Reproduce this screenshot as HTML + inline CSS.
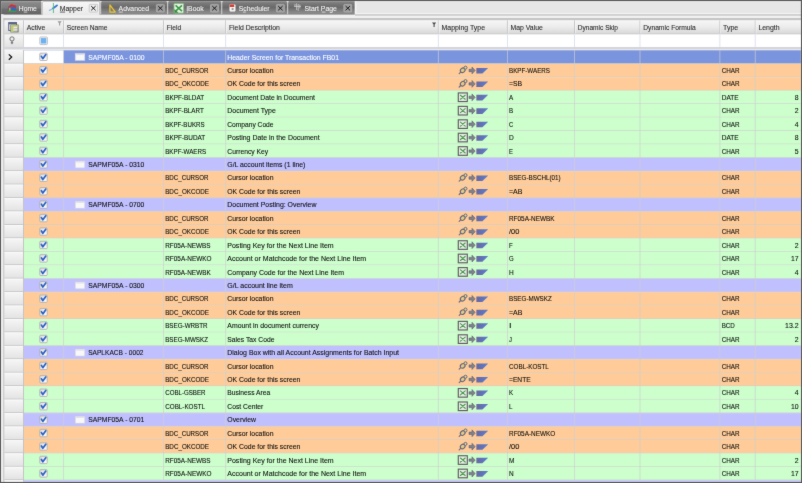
<!DOCTYPE html>
<html lang="en">
<head>
<meta charset="utf-8">
<title>Mapper</title>
<style>
html,body{margin:0;padding:0;background:#5a5a5a;overflow:hidden}
body{width:802px;height:483px;font-family:"Liberation Sans",sans-serif}
svg{display:block;position:absolute;left:0;top:0}
text{font-family:"Liberation Sans",sans-serif}
</style>
</head>
<body>
<svg width="802" height="483" viewBox="0 0 802 483" font-family="Liberation Sans, sans-serif">
<defs>
<linearGradient id="gTab" x1="0" y1="0" x2="0" y2="1"><stop offset="0" stop-color="#909090"/><stop offset="0.14" stop-color="#7b7b7b"/><stop offset="0.48" stop-color="#696969"/><stop offset="1" stop-color="#949494"/></linearGradient>
<linearGradient id="gTabH" x1="0" y1="0" x2="0" y2="1"><stop offset="0" stop-color="#9a9a9a"/><stop offset="0.14" stop-color="#888888"/><stop offset="0.5" stop-color="#7e7e7e"/><stop offset="0.62" stop-color="#6e6e6e"/><stop offset="1" stop-color="#676767"/></linearGradient>
<linearGradient id="gTabA" x1="0" y1="0" x2="0" y2="1"><stop offset="0" stop-color="#f8f8f8"/><stop offset="1" stop-color="#e9e9e9"/></linearGradient>
<linearGradient id="gHdr" x1="0" y1="0" x2="0" y2="1"><stop offset="0" stop-color="#f6f6f6"/><stop offset="0.5" stop-color="#ececec"/><stop offset="1" stop-color="#d9d9d9"/></linearGradient>
<linearGradient id="gInd" x1="0" y1="0" x2="0" y2="1"><stop offset="0" stop-color="#f6f6f6"/><stop offset="1" stop-color="#e2e2e2"/></linearGradient>
<linearGradient id="gFlag" x1="0" y1="0" x2="1" y2="0"><stop offset="0" stop-color="#68689e"/><stop offset="1" stop-color="#5b7cd4"/></linearGradient>
<linearGradient id="gChk" x1="0" y1="0" x2="1" y2="1"><stop offset="0" stop-color="#dcdcdc"/><stop offset="1" stop-color="#ffffff"/></linearGradient>
<g id="chk">
 <rect x="-3.7" y="-3.7" width="7.4" height="7.4" rx="0.8" fill="url(#gChk)" stroke="#a8a8a8" stroke-width="0.8"/>
 <path d="M-2.1,-0.5 L-0.7,1.8 L2.3,-2.3" fill="none" stroke="#2a62c8" stroke-width="1.7" stroke-linecap="round" stroke-linejoin="round"/>
</g>
<g id="arrow">
 <path d="M0,2.2 L3,2.2 L3,0 L6.2,3.4 L3,6.8 L3,4.6 L0,4.6 Z" fill="#828288" stroke="#56567a" stroke-width="0.55" stroke-linejoin="round"/>
</g>
<g id="flag">
 <path d="M0,0 L11.8,0 L6,5.6 L0,5.6 Z" fill="url(#gFlag)"/>
</g>
<g id="pin">
 <path d="M0.6,7.8 L2.6,5.8" stroke="#6a6a82" stroke-width="1.2" stroke-linecap="round"/>
 <ellipse cx="4.1" cy="4.5" rx="2.5" ry="2.1" transform="rotate(-40 4.1 4.5)" fill="#e2cc80" stroke="#646480" stroke-width="1.1"/>
 <circle cx="6.9" cy="1.9" r="1.5" fill="#e8d890" stroke="#646480" stroke-width="1"/>
</g>
<g id="xl">
 <rect x="0.4" y="0.4" width="9" height="8.6" fill="#e6eee6" stroke="#5c5c5c" stroke-width="1.15"/>
 <path d="M2.5,2.7 L7.3,6.7 M7.3,2.7 L2.5,6.7" stroke="#4c9a4c" stroke-width="1.15" stroke-linecap="round"/>
</g>
<g id="fold">
 <rect x="0" y="0" width="9.6" height="6.9" fill="#f8f8f8" stroke="#cfcfda" stroke-width="0.6"/><rect x="0.3" y="0.3" width="9" height="1.2" fill="#dedee8"/>
</g>
<g id="tclose">
 <rect x="-4" y="-3.8" width="8" height="7.6" rx="0.8" fill="#9c9c9c" stroke="#bababa" stroke-width="0.6"/>
 <path d="M-2.2,-2.1 L2.2,2.1 M2.2,-2.1 L-2.2,2.1" stroke="#1a1a1a" stroke-width="1"/>
</g>
<g id="tcloseA">
 <rect x="-4.2" y="-3.9" width="8.4" height="7.8" rx="0.8" fill="#ededed" stroke="#bdbdbd" stroke-width="0.7"/>
 <path d="M-2.2,-2.1 L2.2,2.1 M2.2,-2.1 L-2.2,2.1" stroke="#1a1a1a" stroke-width="1"/>
</g>
<filter id="soft" filterUnits="userSpaceOnUse" x="0" y="0" width="802" height="483" color-interpolation-filters="sRGB">
 <feConvolveMatrix order="3" kernelMatrix="0.012 0.06 0.012 0.06 0.712 0.06 0.012 0.06 0.012" divisor="1" edgeMode="duplicate" preserveAlpha="true"/>
</filter>
<g id="funnel">
 <path d="M-2.1,-2 L2.1,-2 L0.55,0 L0.55,2.4 L-0.55,2.4 L-0.55,0 Z"/>
</g>
</defs>
<g filter="url(#soft)">
<rect x="0" y="0" width="802" height="483" fill="#ececec"/>
<rect x="0" y="0" width="802" height="1.35" fill="#5a5a5a"/>
<rect x="1" y="1.1" width="800" height="13.6" fill="#e6e6e6"/>
<rect x="355" y="13" width="446" height="1.2" fill="#f4f4f4"/>
<rect x="355" y="1.3" width="1.4" height="12.9" fill="#f6f6f6"/>
<rect x="1" y="14.2" width="800" height="3.9" fill="#f1f1f1"/>
<rect x="355" y="14.2" width="446" height="1.5" fill="#c8c8c8"/>
<rect x="3.4" y="18" width="797.4" height="2.4" fill="#c5c5c5"/>
<rect x="1.2" y="1.1" width="40.4" height="13.2" fill="url(#gTabH)"/>
<rect x="41.6" y="0.8" width="58.6" height="14.4" fill="url(#gTabA)"/>
<path d="M42,14.9 L42,1.2 L99.8,1.2 L99.8,14.9" fill="none" stroke="#a2a2a2" stroke-width="0.8"/>
<rect x="100.2" y="1.1" width="67" height="13.2" fill="url(#gTab)"/>
<rect x="167.2" y="1.1" width="54.1" height="13.2" fill="url(#gTab)"/>
<rect x="221.3" y="1.1" width="65.9" height="13.2" fill="url(#gTab)"/>
<rect x="287.2" y="1.1" width="67.4" height="13.2" fill="url(#gTab)"/>
<rect x="1.2" y="13.6" width="40.4" height="0.8" fill="#626262"/>
<rect x="100.2" y="13.6" width="254.4" height="0.8" fill="#787878"/>
<rect x="41.4" y="2" width="1.2" height="12.3" fill="#c6c6c6"/>
<rect x="41" y="1" width="2" height="1.2" fill="#e2e2e2"/>
<rect x="100" y="2" width="1.2" height="12.3" fill="#c6c6c6"/>
<rect x="99.6" y="1" width="2" height="1.2" fill="#e2e2e2"/>
<rect x="167" y="2" width="1.2" height="12.3" fill="#c6c6c6"/>
<rect x="166.6" y="1" width="2" height="1.2" fill="#e2e2e2"/>
<rect x="221.1" y="2" width="1.2" height="12.3" fill="#c6c6c6"/>
<rect x="220.7" y="1" width="2" height="1.2" fill="#e2e2e2"/>
<rect x="287" y="2" width="1.2" height="12.3" fill="#c6c6c6"/>
<rect x="286.6" y="1" width="2" height="1.2" fill="#e2e2e2"/>
<text x="18.8" y="10.9" fill="#f4f4f4" stroke="#f4f4f4" stroke-width="0.1" font-size="7.7" textLength="17.99" lengthAdjust="spacingAndGlyphs">Home</text>
<rect x="23.79" y="11.7" width="3.56" height="0.7" fill="#f4f4f4"/>
<text x="59.7" y="10.9" fill="#2a2a2a" stroke="#2a2a2a" stroke-width="0.1" font-size="7.7" textLength="23.34" lengthAdjust="spacingAndGlyphs">Mapper</text>
<rect x="59.9" y="11.7" width="5.17" height="0.7" fill="#2a2a2a"/>
<use href="#tcloseA" x="93.4" y="8.2"/>
<text x="118.6" y="10.9" fill="#f4f4f4" stroke="#f4f4f4" stroke-width="0.1" font-size="7.7" textLength="30.35" lengthAdjust="spacingAndGlyphs">Advanced</text>
<rect x="118.8" y="11.7" width="3.96" height="0.7" fill="#f4f4f4"/>
<use href="#tclose" x="160.4" y="8.2"/>
<text x="186.6" y="10.9" fill="#f4f4f4" stroke="#f4f4f4" stroke-width="0.1" font-size="7.7" textLength="17.05" lengthAdjust="spacingAndGlyphs">iBook</text>
<rect x="186.8" y="11.7" width="1.33" height="0.7" fill="#f4f4f4"/>
<use href="#tclose" x="214.5" y="8.2"/>
<text x="238.8" y="10.9" fill="#f4f4f4" stroke="#f4f4f4" stroke-width="0.1" font-size="7.7" textLength="30.73" lengthAdjust="spacingAndGlyphs">Scheduler</text>
<rect x="242.95" y="11.7" width="2.97" height="0.7" fill="#f4f4f4"/>
<use href="#tclose" x="280.4" y="8.2"/>
<text x="304.4" y="10.9" fill="#f4f4f4" stroke="#f4f4f4" stroke-width="0.1" font-size="7.7" textLength="32.5" lengthAdjust="spacingAndGlyphs">Start Page</text>
<rect x="321.8" y="11.7" width="3.61" height="0.7" fill="#f4f4f4"/>
<use href="#tclose" x="347.8" y="8.2"/>
<g transform="translate(7.7,4)"><path d="M0.2,6 L8.4,6 L8.4,8 L0.2,8 Z" fill="#3f9a3f"/><path d="M0.6,2.6 L8.2,3 L8.2,6.6 L0.6,6.6 Z" fill="#3566c4"/><rect x="1.3" y="3.6" width="1.5" height="3.1" fill="#e39a2f"/><path d="M0.8,2.4 L3.6,0.2 L8.6,1.8 L8.4,3.6 L4,2.6 L1.4,3.6 Z" fill="#dc2a26"/></g>
<g transform="translate(49,3)"><path d="M0.4,7.4 Q2.4,6.6 4.2,5.2" stroke="#86b6e6" stroke-width="1.2" stroke-linecap="round" fill="none"/><path d="M4.2,5.2 Q6.4,3.8 8,2.4" stroke="#2f7ad2" stroke-width="1.9" stroke-linecap="round" fill="none"/><path d="M4.4,0 L4.4,10" stroke="#4fb877" stroke-width="0.9"/></g>
<g transform="translate(108.4,3.6)"><path d="M1.5,1.4 L1.5,8.5 L6.9,8.5 Z" fill="none" stroke="#e8c330" stroke-width="1.25" stroke-linejoin="round"/></g>
<g transform="translate(173.6,3)"><rect x="0.3" y="0.3" width="9.9" height="9.9" rx="0.9" fill="#e6f2e4" stroke="#6aa868" stroke-width="0.8"/><path d="M0.8,9.8 L0.8,6 L5,9.8 Z" fill="#2f8a3a"/><path d="M2,2.4 L8.4,8.2 M8.4,2.4 L2,8.2" stroke="#3c9a46" stroke-width="1.6"/></g>
<g transform="translate(229.6,4.5)"><rect x="0" y="0" width="5.8" height="6.9" rx="0.8" fill="#fafafa" stroke="#cfcfcf" stroke-width="0.4"/><path d="M0,0.6 Q0,0 0.8,0 L4.6,0 L4.6,2.4 L0,2.4 Z" fill="#d93a32"/><rect x="2" y="3.4" width="2" height="2.2" fill="#9a9a9a"/></g>
<g transform="translate(294,3.4)" stroke="#dcdcdc" stroke-width="0.7" fill="none"><path d="M1,3 L1,0.6 M2.6,6.6 L2.6,0 M4.2,7.4 L4.2,0.6 M5.8,5 L5.8,1.2 M0,3 L7,3"/></g>
<rect x="0" y="0" width="1.1" height="483" fill="#5a5a5a"/>
<rect x="800.9" y="0" width="1.1" height="483" fill="#5a5a5a"/>
<rect x="0" y="481.8" width="802" height="1.2" fill="#5a5a5a"/>
<rect x="1.1" y="14.2" width="2.4" height="467.6" fill="#ededed"/>
<rect x="3.4" y="18" width="1.1" height="463.8" fill="#bcbcbc"/>
<rect x="4.5" y="20.3" width="796.3" height="13.1" fill="url(#gHdr)"/>
<rect x="4.5" y="33.2" width="796.3" height="1.3" fill="#cdcdcd"/>
<rect x="23.05" y="20.3" width="0.9" height="13.1" fill="#c2c2c2"/>
<rect x="23.95" y="20.3" width="0.7" height="13.1" fill="#fbfbfb" opacity="0.8"/>
<rect x="63.15" y="20.3" width="0.9" height="13.1" fill="#c2c2c2"/>
<rect x="64.05" y="20.3" width="0.7" height="13.1" fill="#fbfbfb" opacity="0.8"/>
<rect x="163.15" y="20.3" width="0.9" height="13.1" fill="#c2c2c2"/>
<rect x="164.05" y="20.3" width="0.7" height="13.1" fill="#fbfbfb" opacity="0.8"/>
<rect x="225.25" y="20.3" width="0.9" height="13.1" fill="#c2c2c2"/>
<rect x="226.15" y="20.3" width="0.7" height="13.1" fill="#fbfbfb" opacity="0.8"/>
<rect x="437.85" y="20.3" width="0.9" height="13.1" fill="#c2c2c2"/>
<rect x="438.75" y="20.3" width="0.7" height="13.1" fill="#fbfbfb" opacity="0.8"/>
<rect x="506.95" y="20.3" width="0.9" height="13.1" fill="#c2c2c2"/>
<rect x="507.85" y="20.3" width="0.7" height="13.1" fill="#fbfbfb" opacity="0.8"/>
<rect x="574.15" y="20.3" width="0.9" height="13.1" fill="#c2c2c2"/>
<rect x="575.05" y="20.3" width="0.7" height="13.1" fill="#fbfbfb" opacity="0.8"/>
<rect x="639.55" y="20.3" width="0.9" height="13.1" fill="#c2c2c2"/>
<rect x="640.45" y="20.3" width="0.7" height="13.1" fill="#fbfbfb" opacity="0.8"/>
<rect x="719.45" y="20.3" width="0.9" height="13.1" fill="#c2c2c2"/>
<rect x="720.35" y="20.3" width="0.7" height="13.1" fill="#fbfbfb" opacity="0.8"/>
<rect x="754.75" y="20.3" width="0.9" height="13.1" fill="#c2c2c2"/>
<rect x="755.65" y="20.3" width="0.7" height="13.1" fill="#fbfbfb" opacity="0.8"/>
<text x="26.7" y="29.6" fill="#2c2c2c" stroke="#2c2c2c" stroke-width="0.1" font-size="7.7" textLength="18.54" lengthAdjust="spacingAndGlyphs">Active</text>
<text x="66.8" y="29.6" fill="#2c2c2c" stroke="#2c2c2c" stroke-width="0.1" font-size="7.7" textLength="40.66" lengthAdjust="spacingAndGlyphs">Screen Name</text>
<text x="166.8" y="29.6" fill="#2c2c2c" stroke="#2c2c2c" stroke-width="0.1" font-size="7.7" textLength="14.41" lengthAdjust="spacingAndGlyphs">Field</text>
<text x="228.9" y="29.6" fill="#2c2c2c" stroke="#2c2c2c" stroke-width="0.1" font-size="7.7" textLength="51.02" lengthAdjust="spacingAndGlyphs">Field Description</text>
<text x="441.5" y="29.6" fill="#2c2c2c" stroke="#2c2c2c" stroke-width="0.1" font-size="7.7" textLength="43.51" lengthAdjust="spacingAndGlyphs">Mapping Type</text>
<text x="510.6" y="29.6" fill="#2c2c2c" stroke="#2c2c2c" stroke-width="0.1" font-size="7.7" textLength="32.18" lengthAdjust="spacingAndGlyphs">Map Value</text>
<text x="577.8" y="29.6" fill="#2c2c2c" stroke="#2c2c2c" stroke-width="0.1" font-size="7.7" textLength="40.1" lengthAdjust="spacingAndGlyphs">Dynamic Skip</text>
<text x="643.2" y="29.6" fill="#2c2c2c" stroke="#2c2c2c" stroke-width="0.1" font-size="7.7" textLength="52.6" lengthAdjust="spacingAndGlyphs">Dynamic Formula</text>
<text x="723.1" y="29.6" fill="#2c2c2c" stroke="#2c2c2c" stroke-width="0.1" font-size="7.7" textLength="15.13" lengthAdjust="spacingAndGlyphs">Type</text>
<text x="758.4" y="29.6" fill="#2c2c2c" stroke="#2c2c2c" stroke-width="0.1" font-size="7.7" textLength="21.19" lengthAdjust="spacingAndGlyphs">Length</text>
<use href="#funnel" x="59.6" y="23.2" fill="#9a9a9a"/>
<use href="#funnel" x="434.1" y="24.6" fill="#4a4a4a"/>
<g transform="translate(8.2,22.1)"><rect x="0.5" y="0.5" width="7.8" height="7.8" fill="#dfe2f0" stroke="#5c6488" stroke-width="1"/><rect x="0.5" y="0.3" width="7.8" height="1.9" fill="#5c6488"/><rect x="2.7" y="3" width="7.2" height="6.8" fill="#fafaf4" stroke="#6e7060" stroke-width="1"/><rect x="2.7" y="3" width="7.2" height="1.6" fill="#b9c766"/><rect x="2.7" y="3" width="2.6" height="6.8" fill="#bfcb6e"/><path d="M5.4,6.2 L9.8,6.2 M5.4,8 L9.8,8" stroke="#8a8a80" stroke-width="0.6"/></g>
<rect x="4.5" y="34.5" width="19" height="12.7" fill="url(#gInd)"/>
<rect x="23.5" y="34.5" width="777.3" height="12.7" fill="#ffffff"/>
<rect x="63.2" y="34.5" width="0.8" height="12.7" fill="#d6dcee"/>
<rect x="163.2" y="34.5" width="0.8" height="12.7" fill="#d6dcee"/>
<rect x="225.3" y="34.5" width="0.8" height="12.7" fill="#d6dcee"/>
<rect x="437.9" y="34.5" width="0.8" height="12.7" fill="#d6dcee"/>
<rect x="507" y="34.5" width="0.8" height="12.7" fill="#d6dcee"/>
<rect x="574.2" y="34.5" width="0.8" height="12.7" fill="#d6dcee"/>
<rect x="639.6" y="34.5" width="0.8" height="12.7" fill="#d6dcee"/>
<rect x="719.5" y="34.5" width="0.8" height="12.7" fill="#d6dcee"/>
<rect x="754.8" y="34.5" width="0.8" height="12.7" fill="#d6dcee"/>
<rect x="23.1" y="34.5" width="0.8" height="12.7" fill="#cfcfcf"/>
<g transform="translate(9.6,36.6)" fill="none" stroke="#555" stroke-width="0.8"><circle cx="2.4" cy="2.3" r="2.1"/><path d="M2.4,4.4 L2.4,7.6 M1.2,6.2 L3.6,6.2"/></g>
<g transform="translate(43.6,40.8)"><rect x="-3.8" y="-3.8" width="7.6" height="7.6" rx="0.8" fill="#eef4fc" stroke="#b4b4b4" stroke-width="0.8"/><rect x="-2.7" y="-2.7" width="5.4" height="5.4" fill="#6cb2f0"/></g>
<rect x="4.5" y="47.2" width="796.3" height="3.13" fill="#dcdcdc"/>
<rect x="4.5" y="47.2" width="796.3" height="1.5" fill="#d0d3da"/>
<rect x="4.5" y="49.33" width="796.3" height="1" fill="#ececec"/>
<clipPath id="cl"><rect x="0" y="0" width="802" height="481.8"/></clipPath>
<g clip-path="url(#cl)">
<rect x="4.5" y="50.33" width="19" height="13.44" fill="url(#gInd)"/>
<rect x="4.5" y="62.77" width="19" height="1" fill="#c2c2c2"/>
<rect x="4.5" y="50.33" width="18.4" height="0.7" fill="#fbfbfb"/>
<rect x="23.5" y="50.33" width="777.3" height="13.44" fill="#7A94DE"/>
<rect x="23.5" y="50.33" width="40.1" height="13.44" fill="#ffffff"/>
<rect x="4.5" y="63.02" width="796.3" height="0.8" fill="#CFCFCF" opacity="0.85"/>
<use href="#chk" x="43.5" y="56.83"/>
<use href="#fold" x="75.2" y="53.53"/>
<text x="88.2" y="59.53" fill="#ffffff" stroke="#ffffff" stroke-width="0.1" font-size="7.5" textLength="56.4" lengthAdjust="spacingAndGlyphs">SAPMF05A - 0100</text>
<text x="227.3" y="59.53" fill="#ffffff" stroke="#ffffff" stroke-width="0.1" font-size="7.5" textLength="111.66" lengthAdjust="spacingAndGlyphs">Header Screen for Transaction FB01</text>
<rect x="4.5" y="63.77" width="19" height="13.44" fill="url(#gInd)"/>
<rect x="4.5" y="76.2" width="19" height="1" fill="#c2c2c2"/>
<rect x="4.5" y="63.77" width="18.4" height="0.7" fill="#fbfbfb"/>
<rect x="23.5" y="63.77" width="777.3" height="13.44" fill="#FFCC99"/>
<rect x="4.5" y="76.45" width="796.3" height="0.8" fill="#CFCFCF" opacity="0.85"/>
<use href="#chk" x="43.5" y="70.27"/>
<text x="165.2" y="72.97" fill="#101010" stroke="#101010" stroke-width="0.1" font-size="7.5" textLength="43.25" lengthAdjust="spacingAndGlyphs">BDC_CURSOR</text>
<text x="227.3" y="72.97" fill="#101010" stroke="#101010" stroke-width="0.1" font-size="7.5" textLength="46.22" lengthAdjust="spacingAndGlyphs">Cursor location</text>
<use href="#pin" x="458.6" y="65.77"/>
<use href="#arrow" x="469" y="67.07"/>
<use href="#flag" x="476.4" y="67.97"/>
<text x="509" y="72.97" fill="#101010" stroke="#101010" stroke-width="0.1" font-size="7.5" textLength="40.97" lengthAdjust="spacingAndGlyphs">BKPF-WAERS</text>
<text x="721.7" y="72.97" fill="#101010" stroke="#101010" stroke-width="0.1" font-size="7.5" textLength="17.9" lengthAdjust="spacingAndGlyphs">CHAR</text>
<rect x="4.5" y="77.2" width="19" height="13.44" fill="url(#gInd)"/>
<rect x="4.5" y="89.64" width="19" height="1" fill="#c2c2c2"/>
<rect x="4.5" y="77.2" width="18.4" height="0.7" fill="#fbfbfb"/>
<rect x="23.5" y="77.2" width="777.3" height="13.44" fill="#FFCC99"/>
<rect x="4.5" y="89.89" width="796.3" height="0.8" fill="#CFCFCF" opacity="0.85"/>
<use href="#chk" x="43.5" y="83.7"/>
<text x="165.2" y="86.4" fill="#101010" stroke="#101010" stroke-width="0.1" font-size="7.5" textLength="43.81" lengthAdjust="spacingAndGlyphs">BDC_OKCODE</text>
<text x="227.3" y="86.4" fill="#101010" stroke="#101010" stroke-width="0.1" font-size="7.5" textLength="73.05" lengthAdjust="spacingAndGlyphs">OK Code for this screen</text>
<use href="#pin" x="458.6" y="79.2"/>
<use href="#arrow" x="469" y="80.5"/>
<use href="#flag" x="476.4" y="81.4"/>
<text x="509" y="86.4" fill="#101010" stroke="#101010" stroke-width="0.1" font-size="7.5" textLength="13.12" lengthAdjust="spacingAndGlyphs">=SB</text>
<text x="721.7" y="86.4" fill="#101010" stroke="#101010" stroke-width="0.1" font-size="7.5" textLength="17.9" lengthAdjust="spacingAndGlyphs">CHAR</text>
<rect x="4.5" y="90.64" width="19" height="13.44" fill="url(#gInd)"/>
<rect x="4.5" y="103.08" width="19" height="1" fill="#c2c2c2"/>
<rect x="4.5" y="90.64" width="18.4" height="0.7" fill="#fbfbfb"/>
<rect x="23.5" y="90.64" width="777.3" height="13.44" fill="#CCFFCC"/>
<rect x="4.5" y="103.33" width="796.3" height="0.8" fill="#CFCFCF" opacity="0.85"/>
<use href="#chk" x="43.5" y="97.14"/>
<text x="165.2" y="99.84" fill="#101010" stroke="#101010" stroke-width="0.1" font-size="7.5" textLength="38.93" lengthAdjust="spacingAndGlyphs">BKPF-BLDAT</text>
<text x="227.3" y="99.84" fill="#101010" stroke="#101010" stroke-width="0.1" font-size="7.5" textLength="87.6" lengthAdjust="spacingAndGlyphs">Document Date in Document</text>
<use href="#xl" x="457.9" y="92.54"/>
<use href="#arrow" x="469" y="93.94"/>
<use href="#flag" x="476.4" y="94.84"/>
<text x="509" y="99.84" fill="#101010" stroke="#101010" stroke-width="0.1" font-size="7.5" textLength="4.2" lengthAdjust="spacingAndGlyphs">A</text>
<text x="721.7" y="99.84" fill="#101010" stroke="#101010" stroke-width="0.1" font-size="7.5" textLength="16.96" lengthAdjust="spacingAndGlyphs">DATE</text>
<text x="794.78" y="99.84" fill="#101010" stroke="#101010" stroke-width="0.1" font-size="7.5" textLength="3.82" lengthAdjust="spacingAndGlyphs">8</text>
<rect x="4.5" y="104.08" width="19" height="13.44" fill="url(#gInd)"/>
<rect x="4.5" y="116.52" width="19" height="1" fill="#c2c2c2"/>
<rect x="4.5" y="104.08" width="18.4" height="0.7" fill="#fbfbfb"/>
<rect x="23.5" y="104.08" width="777.3" height="13.44" fill="#CCFFCC"/>
<rect x="4.5" y="116.77" width="796.3" height="0.8" fill="#CFCFCF" opacity="0.85"/>
<use href="#chk" x="43.5" y="110.58"/>
<text x="165.2" y="113.28" fill="#101010" stroke="#101010" stroke-width="0.1" font-size="7.5" textLength="38.53" lengthAdjust="spacingAndGlyphs">BKPF-BLART</text>
<text x="227.3" y="113.28" fill="#101010" stroke="#101010" stroke-width="0.1" font-size="7.5" textLength="48.45" lengthAdjust="spacingAndGlyphs">Document Type</text>
<use href="#xl" x="457.9" y="105.98"/>
<use href="#arrow" x="469" y="107.38"/>
<use href="#flag" x="476.4" y="108.28"/>
<text x="509" y="113.28" fill="#101010" stroke="#101010" stroke-width="0.1" font-size="7.5" textLength="4.12" lengthAdjust="spacingAndGlyphs">B</text>
<text x="721.7" y="113.28" fill="#101010" stroke="#101010" stroke-width="0.1" font-size="7.5" textLength="17.9" lengthAdjust="spacingAndGlyphs">CHAR</text>
<text x="794.78" y="113.28" fill="#101010" stroke="#101010" stroke-width="0.1" font-size="7.5" textLength="3.82" lengthAdjust="spacingAndGlyphs">2</text>
<rect x="4.5" y="117.52" width="19" height="13.44" fill="url(#gInd)"/>
<rect x="4.5" y="129.95" width="19" height="1" fill="#c2c2c2"/>
<rect x="4.5" y="117.52" width="18.4" height="0.7" fill="#fbfbfb"/>
<rect x="23.5" y="117.52" width="777.3" height="13.44" fill="#CCFFCC"/>
<rect x="4.5" y="130.2" width="796.3" height="0.8" fill="#CFCFCF" opacity="0.85"/>
<use href="#chk" x="43.5" y="124.02"/>
<text x="165.2" y="126.72" fill="#101010" stroke="#101010" stroke-width="0.1" font-size="7.5" textLength="39.36" lengthAdjust="spacingAndGlyphs">BKPF-BUKRS</text>
<text x="227.3" y="126.72" fill="#101010" stroke="#101010" stroke-width="0.1" font-size="7.5" textLength="46.23" lengthAdjust="spacingAndGlyphs">Company Code</text>
<use href="#xl" x="457.9" y="119.42"/>
<use href="#arrow" x="469" y="120.81"/>
<use href="#flag" x="476.4" y="121.72"/>
<text x="509" y="126.72" fill="#101010" stroke="#101010" stroke-width="0.1" font-size="7.5" textLength="4.21" lengthAdjust="spacingAndGlyphs">C</text>
<text x="721.7" y="126.72" fill="#101010" stroke="#101010" stroke-width="0.1" font-size="7.5" textLength="17.9" lengthAdjust="spacingAndGlyphs">CHAR</text>
<text x="794.78" y="126.72" fill="#101010" stroke="#101010" stroke-width="0.1" font-size="7.5" textLength="3.82" lengthAdjust="spacingAndGlyphs">4</text>
<rect x="4.5" y="130.95" width="19" height="13.44" fill="url(#gInd)"/>
<rect x="4.5" y="143.39" width="19" height="1" fill="#c2c2c2"/>
<rect x="4.5" y="130.95" width="18.4" height="0.7" fill="#fbfbfb"/>
<rect x="23.5" y="130.95" width="777.3" height="13.44" fill="#CCFFCC"/>
<rect x="4.5" y="143.64" width="796.3" height="0.8" fill="#CFCFCF" opacity="0.85"/>
<use href="#chk" x="43.5" y="137.45"/>
<text x="165.2" y="140.15" fill="#101010" stroke="#101010" stroke-width="0.1" font-size="7.5" textLength="40.03" lengthAdjust="spacingAndGlyphs">BKPF-BUDAT</text>
<text x="227.3" y="140.15" fill="#101010" stroke="#101010" stroke-width="0.1" font-size="7.5" textLength="92.27" lengthAdjust="spacingAndGlyphs">Posting Date in the Document</text>
<use href="#xl" x="457.9" y="132.85"/>
<use href="#arrow" x="469" y="134.25"/>
<use href="#flag" x="476.4" y="135.15"/>
<text x="509" y="140.15" fill="#101010" stroke="#101010" stroke-width="0.1" font-size="7.5" textLength="4.75" lengthAdjust="spacingAndGlyphs">D</text>
<text x="721.7" y="140.15" fill="#101010" stroke="#101010" stroke-width="0.1" font-size="7.5" textLength="16.96" lengthAdjust="spacingAndGlyphs">DATE</text>
<text x="794.78" y="140.15" fill="#101010" stroke="#101010" stroke-width="0.1" font-size="7.5" textLength="3.82" lengthAdjust="spacingAndGlyphs">8</text>
<rect x="4.5" y="144.39" width="19" height="13.44" fill="url(#gInd)"/>
<rect x="4.5" y="156.83" width="19" height="1" fill="#c2c2c2"/>
<rect x="4.5" y="144.39" width="18.4" height="0.7" fill="#fbfbfb"/>
<rect x="23.5" y="144.39" width="777.3" height="13.44" fill="#CCFFCC"/>
<rect x="4.5" y="157.08" width="796.3" height="0.8" fill="#CFCFCF" opacity="0.85"/>
<use href="#chk" x="43.5" y="150.89"/>
<text x="165.2" y="153.59" fill="#101010" stroke="#101010" stroke-width="0.1" font-size="7.5" textLength="40.97" lengthAdjust="spacingAndGlyphs">BKPF-WAERS</text>
<text x="227.3" y="153.59" fill="#101010" stroke="#101010" stroke-width="0.1" font-size="7.5" textLength="40.93" lengthAdjust="spacingAndGlyphs">Currency Key</text>
<use href="#xl" x="457.9" y="146.29"/>
<use href="#arrow" x="469" y="147.69"/>
<use href="#flag" x="476.4" y="148.59"/>
<text x="509" y="153.59" fill="#101010" stroke="#101010" stroke-width="0.1" font-size="7.5" textLength="3.93" lengthAdjust="spacingAndGlyphs">E</text>
<text x="721.7" y="153.59" fill="#101010" stroke="#101010" stroke-width="0.1" font-size="7.5" textLength="17.9" lengthAdjust="spacingAndGlyphs">CHAR</text>
<text x="794.78" y="153.59" fill="#101010" stroke="#101010" stroke-width="0.1" font-size="7.5" textLength="3.82" lengthAdjust="spacingAndGlyphs">5</text>
<rect x="4.5" y="157.83" width="19" height="13.44" fill="url(#gInd)"/>
<rect x="4.5" y="170.26" width="19" height="1" fill="#c2c2c2"/>
<rect x="4.5" y="157.83" width="18.4" height="0.7" fill="#fbfbfb"/>
<rect x="23.5" y="157.83" width="777.3" height="13.44" fill="#C0C0FF"/>
<rect x="4.5" y="170.51" width="796.3" height="0.8" fill="#CFCFCF" opacity="0.85"/>
<use href="#chk" x="43.5" y="164.33"/>
<use href="#fold" x="75.2" y="161.03"/>
<text x="88.2" y="167.03" fill="#101010" stroke="#101010" stroke-width="0.1" font-size="7.5" textLength="56.2" lengthAdjust="spacingAndGlyphs">SAPMF05A - 0310</text>
<text x="227.3" y="167.03" fill="#101010" stroke="#101010" stroke-width="0.1" font-size="7.5" textLength="78.1" lengthAdjust="spacingAndGlyphs">G/L account items (1 line)</text>
<rect x="4.5" y="171.26" width="19" height="13.44" fill="url(#gInd)"/>
<rect x="4.5" y="183.7" width="19" height="1" fill="#c2c2c2"/>
<rect x="4.5" y="171.26" width="18.4" height="0.7" fill="#fbfbfb"/>
<rect x="23.5" y="171.26" width="777.3" height="13.44" fill="#FFCC99"/>
<rect x="4.5" y="183.95" width="796.3" height="0.8" fill="#CFCFCF" opacity="0.85"/>
<use href="#chk" x="43.5" y="177.76"/>
<text x="165.2" y="180.46" fill="#101010" stroke="#101010" stroke-width="0.1" font-size="7.5" textLength="43.25" lengthAdjust="spacingAndGlyphs">BDC_CURSOR</text>
<text x="227.3" y="180.46" fill="#101010" stroke="#101010" stroke-width="0.1" font-size="7.5" textLength="46.22" lengthAdjust="spacingAndGlyphs">Cursor location</text>
<use href="#pin" x="458.6" y="173.26"/>
<use href="#arrow" x="469" y="174.56"/>
<use href="#flag" x="476.4" y="175.46"/>
<text x="509" y="180.46" fill="#101010" stroke="#101010" stroke-width="0.1" font-size="7.5" textLength="51.6" lengthAdjust="spacingAndGlyphs">BSEG-BSCHL(01)</text>
<text x="721.7" y="180.46" fill="#101010" stroke="#101010" stroke-width="0.1" font-size="7.5" textLength="17.9" lengthAdjust="spacingAndGlyphs">CHAR</text>
<rect x="4.5" y="184.7" width="19" height="13.44" fill="url(#gInd)"/>
<rect x="4.5" y="197.14" width="19" height="1" fill="#c2c2c2"/>
<rect x="4.5" y="184.7" width="18.4" height="0.7" fill="#fbfbfb"/>
<rect x="23.5" y="184.7" width="777.3" height="13.44" fill="#FFCC99"/>
<rect x="4.5" y="197.39" width="796.3" height="0.8" fill="#CFCFCF" opacity="0.85"/>
<use href="#chk" x="43.5" y="191.2"/>
<text x="165.2" y="193.9" fill="#101010" stroke="#101010" stroke-width="0.1" font-size="7.5" textLength="43.81" lengthAdjust="spacingAndGlyphs">BDC_OKCODE</text>
<text x="227.3" y="193.9" fill="#101010" stroke="#101010" stroke-width="0.1" font-size="7.5" textLength="73.05" lengthAdjust="spacingAndGlyphs">OK Code for this screen</text>
<use href="#pin" x="458.6" y="186.7"/>
<use href="#arrow" x="469" y="188"/>
<use href="#flag" x="476.4" y="188.9"/>
<text x="509" y="193.9" fill="#101010" stroke="#101010" stroke-width="0.1" font-size="7.5" textLength="13.42" lengthAdjust="spacingAndGlyphs">=AB</text>
<text x="721.7" y="193.9" fill="#101010" stroke="#101010" stroke-width="0.1" font-size="7.5" textLength="17.9" lengthAdjust="spacingAndGlyphs">CHAR</text>
<rect x="4.5" y="198.14" width="19" height="13.44" fill="url(#gInd)"/>
<rect x="4.5" y="210.57" width="19" height="1" fill="#c2c2c2"/>
<rect x="4.5" y="198.14" width="18.4" height="0.7" fill="#fbfbfb"/>
<rect x="23.5" y="198.14" width="777.3" height="13.44" fill="#C0C0FF"/>
<rect x="4.5" y="210.82" width="796.3" height="0.8" fill="#CFCFCF" opacity="0.85"/>
<use href="#chk" x="43.5" y="204.64"/>
<use href="#fold" x="75.2" y="201.34"/>
<text x="88.2" y="207.34" fill="#101010" stroke="#101010" stroke-width="0.1" font-size="7.5" textLength="56.2" lengthAdjust="spacingAndGlyphs">SAPMF05A - 0700</text>
<text x="227.3" y="207.34" fill="#101010" stroke="#101010" stroke-width="0.1" font-size="7.5" textLength="89.1" lengthAdjust="spacingAndGlyphs">Document Posting: Overview</text>
<rect x="4.5" y="211.57" width="19" height="13.44" fill="url(#gInd)"/>
<rect x="4.5" y="224.01" width="19" height="1" fill="#c2c2c2"/>
<rect x="4.5" y="211.57" width="18.4" height="0.7" fill="#fbfbfb"/>
<rect x="23.5" y="211.57" width="777.3" height="13.44" fill="#FFCC99"/>
<rect x="4.5" y="224.26" width="796.3" height="0.8" fill="#CFCFCF" opacity="0.85"/>
<use href="#chk" x="43.5" y="218.07"/>
<text x="165.2" y="220.77" fill="#101010" stroke="#101010" stroke-width="0.1" font-size="7.5" textLength="43.25" lengthAdjust="spacingAndGlyphs">BDC_CURSOR</text>
<text x="227.3" y="220.77" fill="#101010" stroke="#101010" stroke-width="0.1" font-size="7.5" textLength="46.22" lengthAdjust="spacingAndGlyphs">Cursor location</text>
<use href="#pin" x="458.6" y="213.57"/>
<use href="#arrow" x="469" y="214.87"/>
<use href="#flag" x="476.4" y="215.77"/>
<text x="509" y="220.77" fill="#101010" stroke="#101010" stroke-width="0.1" font-size="7.5" textLength="45.53" lengthAdjust="spacingAndGlyphs">RF05A-NEWBK</text>
<text x="721.7" y="220.77" fill="#101010" stroke="#101010" stroke-width="0.1" font-size="7.5" textLength="17.9" lengthAdjust="spacingAndGlyphs">CHAR</text>
<rect x="4.5" y="225.01" width="19" height="13.44" fill="url(#gInd)"/>
<rect x="4.5" y="237.45" width="19" height="1" fill="#c2c2c2"/>
<rect x="4.5" y="225.01" width="18.4" height="0.7" fill="#fbfbfb"/>
<rect x="23.5" y="225.01" width="777.3" height="13.44" fill="#FFCC99"/>
<rect x="4.5" y="237.7" width="796.3" height="0.8" fill="#CFCFCF" opacity="0.85"/>
<use href="#chk" x="43.5" y="231.51"/>
<text x="165.2" y="234.21" fill="#101010" stroke="#101010" stroke-width="0.1" font-size="7.5" textLength="43.81" lengthAdjust="spacingAndGlyphs">BDC_OKCODE</text>
<text x="227.3" y="234.21" fill="#101010" stroke="#101010" stroke-width="0.1" font-size="7.5" textLength="73.05" lengthAdjust="spacingAndGlyphs">OK Code for this screen</text>
<use href="#pin" x="458.6" y="227.01"/>
<use href="#arrow" x="469" y="228.31"/>
<use href="#flag" x="476.4" y="229.21"/>
<text x="509" y="234.21" fill="#101010" stroke="#101010" stroke-width="0.1" font-size="7.5" textLength="10.32" lengthAdjust="spacingAndGlyphs">/00</text>
<text x="721.7" y="234.21" fill="#101010" stroke="#101010" stroke-width="0.1" font-size="7.5" textLength="17.9" lengthAdjust="spacingAndGlyphs">CHAR</text>
<rect x="4.5" y="238.45" width="19" height="13.44" fill="url(#gInd)"/>
<rect x="4.5" y="250.88" width="19" height="1" fill="#c2c2c2"/>
<rect x="4.5" y="238.45" width="18.4" height="0.7" fill="#fbfbfb"/>
<rect x="23.5" y="238.45" width="777.3" height="13.44" fill="#CCFFCC"/>
<rect x="4.5" y="251.13" width="796.3" height="0.8" fill="#CFCFCF" opacity="0.85"/>
<use href="#chk" x="43.5" y="244.95"/>
<text x="165.2" y="247.65" fill="#101010" stroke="#101010" stroke-width="0.1" font-size="7.5" textLength="45.31" lengthAdjust="spacingAndGlyphs">RF05A-NEWBS</text>
<text x="227.3" y="247.65" fill="#101010" stroke="#101010" stroke-width="0.1" font-size="7.5" textLength="106.39" lengthAdjust="spacingAndGlyphs">Posting Key for the Next Line Item</text>
<use href="#xl" x="457.9" y="240.35"/>
<use href="#arrow" x="469" y="241.75"/>
<use href="#flag" x="476.4" y="242.65"/>
<text x="509" y="247.65" fill="#101010" stroke="#101010" stroke-width="0.1" font-size="7.5" textLength="3.65" lengthAdjust="spacingAndGlyphs">F</text>
<text x="721.7" y="247.65" fill="#101010" stroke="#101010" stroke-width="0.1" font-size="7.5" textLength="17.9" lengthAdjust="spacingAndGlyphs">CHAR</text>
<text x="794.78" y="247.65" fill="#101010" stroke="#101010" stroke-width="0.1" font-size="7.5" textLength="3.82" lengthAdjust="spacingAndGlyphs">2</text>
<rect x="4.5" y="251.88" width="19" height="13.44" fill="url(#gInd)"/>
<rect x="4.5" y="264.32" width="19" height="1" fill="#c2c2c2"/>
<rect x="4.5" y="251.88" width="18.4" height="0.7" fill="#fbfbfb"/>
<rect x="23.5" y="251.88" width="777.3" height="13.44" fill="#CCFFCC"/>
<rect x="4.5" y="264.57" width="796.3" height="0.8" fill="#CFCFCF" opacity="0.85"/>
<use href="#chk" x="43.5" y="258.38"/>
<text x="165.2" y="261.08" fill="#101010" stroke="#101010" stroke-width="0.1" font-size="7.5" textLength="46.36" lengthAdjust="spacingAndGlyphs">RF05A-NEWKO</text>
<text x="227.3" y="261.08" fill="#101010" stroke="#101010" stroke-width="0.1" font-size="7.5" textLength="138.85" lengthAdjust="spacingAndGlyphs">Account or Matchcode for the Next Line Item</text>
<use href="#xl" x="457.9" y="253.78"/>
<use href="#arrow" x="469" y="255.19"/>
<use href="#flag" x="476.4" y="256.08"/>
<text x="509" y="261.08" fill="#101010" stroke="#101010" stroke-width="0.1" font-size="7.5" textLength="4.67" lengthAdjust="spacingAndGlyphs">G</text>
<text x="721.7" y="261.08" fill="#101010" stroke="#101010" stroke-width="0.1" font-size="7.5" textLength="17.9" lengthAdjust="spacingAndGlyphs">CHAR</text>
<text x="790.96" y="261.08" fill="#101010" stroke="#101010" stroke-width="0.1" font-size="7.5" textLength="7.64" lengthAdjust="spacingAndGlyphs">17</text>
<rect x="4.5" y="265.32" width="19" height="13.44" fill="url(#gInd)"/>
<rect x="4.5" y="277.76" width="19" height="1" fill="#c2c2c2"/>
<rect x="4.5" y="265.32" width="18.4" height="0.7" fill="#fbfbfb"/>
<rect x="23.5" y="265.32" width="777.3" height="13.44" fill="#CCFFCC"/>
<rect x="4.5" y="278.01" width="796.3" height="0.8" fill="#CFCFCF" opacity="0.85"/>
<use href="#chk" x="43.5" y="271.82"/>
<text x="165.2" y="274.52" fill="#101010" stroke="#101010" stroke-width="0.1" font-size="7.5" textLength="45.53" lengthAdjust="spacingAndGlyphs">RF05A-NEWBK</text>
<text x="227.3" y="274.52" fill="#101010" stroke="#101010" stroke-width="0.1" font-size="7.5" textLength="116.65" lengthAdjust="spacingAndGlyphs">Company Code for the Next Line Item</text>
<use href="#xl" x="457.9" y="267.22"/>
<use href="#arrow" x="469" y="268.62"/>
<use href="#flag" x="476.4" y="269.52"/>
<text x="509" y="274.52" fill="#101010" stroke="#101010" stroke-width="0.1" font-size="7.5" textLength="4.72" lengthAdjust="spacingAndGlyphs">H</text>
<text x="721.7" y="274.52" fill="#101010" stroke="#101010" stroke-width="0.1" font-size="7.5" textLength="17.9" lengthAdjust="spacingAndGlyphs">CHAR</text>
<text x="794.78" y="274.52" fill="#101010" stroke="#101010" stroke-width="0.1" font-size="7.5" textLength="3.82" lengthAdjust="spacingAndGlyphs">4</text>
<rect x="4.5" y="278.76" width="19" height="13.44" fill="url(#gInd)"/>
<rect x="4.5" y="291.2" width="19" height="1" fill="#c2c2c2"/>
<rect x="4.5" y="278.76" width="18.4" height="0.7" fill="#fbfbfb"/>
<rect x="23.5" y="278.76" width="777.3" height="13.44" fill="#C0C0FF"/>
<rect x="4.5" y="291.45" width="796.3" height="0.8" fill="#CFCFCF" opacity="0.85"/>
<use href="#chk" x="43.5" y="285.26"/>
<use href="#fold" x="75.2" y="281.96"/>
<text x="88.2" y="287.96" fill="#101010" stroke="#101010" stroke-width="0.1" font-size="7.5" textLength="56.2" lengthAdjust="spacingAndGlyphs">SAPMF05A - 0300</text>
<text x="227.3" y="287.96" fill="#101010" stroke="#101010" stroke-width="0.1" font-size="7.5" textLength="65.43" lengthAdjust="spacingAndGlyphs">G/L account line item</text>
<rect x="4.5" y="292.2" width="19" height="13.44" fill="url(#gInd)"/>
<rect x="4.5" y="304.63" width="19" height="1" fill="#c2c2c2"/>
<rect x="4.5" y="292.2" width="18.4" height="0.7" fill="#fbfbfb"/>
<rect x="23.5" y="292.2" width="777.3" height="13.44" fill="#FFCC99"/>
<rect x="4.5" y="304.88" width="796.3" height="0.8" fill="#CFCFCF" opacity="0.85"/>
<use href="#chk" x="43.5" y="298.7"/>
<text x="165.2" y="301.4" fill="#101010" stroke="#101010" stroke-width="0.1" font-size="7.5" textLength="43.25" lengthAdjust="spacingAndGlyphs">BDC_CURSOR</text>
<text x="227.3" y="301.4" fill="#101010" stroke="#101010" stroke-width="0.1" font-size="7.5" textLength="46.22" lengthAdjust="spacingAndGlyphs">Cursor location</text>
<use href="#pin" x="458.6" y="294.2"/>
<use href="#arrow" x="469" y="295.5"/>
<use href="#flag" x="476.4" y="296.4"/>
<text x="509" y="301.4" fill="#101010" stroke="#101010" stroke-width="0.1" font-size="7.5" textLength="42.8" lengthAdjust="spacingAndGlyphs">BSEG-MWSKZ</text>
<text x="721.7" y="301.4" fill="#101010" stroke="#101010" stroke-width="0.1" font-size="7.5" textLength="17.9" lengthAdjust="spacingAndGlyphs">CHAR</text>
<rect x="4.5" y="305.63" width="19" height="13.44" fill="url(#gInd)"/>
<rect x="4.5" y="318.07" width="19" height="1" fill="#c2c2c2"/>
<rect x="4.5" y="305.63" width="18.4" height="0.7" fill="#fbfbfb"/>
<rect x="23.5" y="305.63" width="777.3" height="13.44" fill="#FFCC99"/>
<rect x="4.5" y="318.32" width="796.3" height="0.8" fill="#CFCFCF" opacity="0.85"/>
<use href="#chk" x="43.5" y="312.13"/>
<text x="165.2" y="314.83" fill="#101010" stroke="#101010" stroke-width="0.1" font-size="7.5" textLength="43.81" lengthAdjust="spacingAndGlyphs">BDC_OKCODE</text>
<text x="227.3" y="314.83" fill="#101010" stroke="#101010" stroke-width="0.1" font-size="7.5" textLength="73.05" lengthAdjust="spacingAndGlyphs">OK Code for this screen</text>
<use href="#pin" x="458.6" y="307.63"/>
<use href="#arrow" x="469" y="308.93"/>
<use href="#flag" x="476.4" y="309.83"/>
<text x="509" y="314.83" fill="#101010" stroke="#101010" stroke-width="0.1" font-size="7.5" textLength="13.42" lengthAdjust="spacingAndGlyphs">=AB</text>
<text x="721.7" y="314.83" fill="#101010" stroke="#101010" stroke-width="0.1" font-size="7.5" textLength="17.9" lengthAdjust="spacingAndGlyphs">CHAR</text>
<rect x="4.5" y="319.07" width="19" height="13.44" fill="url(#gInd)"/>
<rect x="4.5" y="331.51" width="19" height="1" fill="#c2c2c2"/>
<rect x="4.5" y="319.07" width="18.4" height="0.7" fill="#fbfbfb"/>
<rect x="23.5" y="319.07" width="777.3" height="13.44" fill="#CCFFCC"/>
<rect x="4.5" y="331.76" width="796.3" height="0.8" fill="#CFCFCF" opacity="0.85"/>
<use href="#chk" x="43.5" y="325.57"/>
<text x="165.2" y="328.27" fill="#101010" stroke="#101010" stroke-width="0.1" font-size="7.5" textLength="42.38" lengthAdjust="spacingAndGlyphs">BSEG-WRBTR</text>
<text x="227.3" y="328.27" fill="#101010" stroke="#101010" stroke-width="0.1" font-size="7.5" textLength="91.6" lengthAdjust="spacingAndGlyphs">Amount in document currency</text>
<use href="#xl" x="457.9" y="320.97"/>
<use href="#arrow" x="469" y="322.37"/>
<use href="#flag" x="476.4" y="323.27"/>
<text x="509" y="328.27" fill="#101010" stroke="#101010" stroke-width="0.1" font-size="7.5" textLength="2.61" lengthAdjust="spacingAndGlyphs">I</text>
<text x="721.7" y="328.27" fill="#101010" stroke="#101010" stroke-width="0.1" font-size="7.5" textLength="13.08" lengthAdjust="spacingAndGlyphs">BCD</text>
<text x="785.01" y="328.27" fill="#101010" stroke="#101010" stroke-width="0.1" font-size="7.5" textLength="13.59" lengthAdjust="spacingAndGlyphs">13.2</text>
<rect x="4.5" y="332.51" width="19" height="13.44" fill="url(#gInd)"/>
<rect x="4.5" y="344.94" width="19" height="1" fill="#c2c2c2"/>
<rect x="4.5" y="332.51" width="18.4" height="0.7" fill="#fbfbfb"/>
<rect x="23.5" y="332.51" width="777.3" height="13.44" fill="#CCFFCC"/>
<rect x="4.5" y="345.19" width="796.3" height="0.8" fill="#CFCFCF" opacity="0.85"/>
<use href="#chk" x="43.5" y="339.01"/>
<text x="165.2" y="341.71" fill="#101010" stroke="#101010" stroke-width="0.1" font-size="7.5" textLength="42.8" lengthAdjust="spacingAndGlyphs">BSEG-MWSKZ</text>
<text x="227.3" y="341.71" fill="#101010" stroke="#101010" stroke-width="0.1" font-size="7.5" textLength="47.15" lengthAdjust="spacingAndGlyphs">Sales Tax Code</text>
<use href="#xl" x="457.9" y="334.41"/>
<use href="#arrow" x="469" y="335.81"/>
<use href="#flag" x="476.4" y="336.71"/>
<text x="509" y="341.71" fill="#101010" stroke="#101010" stroke-width="0.1" font-size="7.5" textLength="2.92" lengthAdjust="spacingAndGlyphs">J</text>
<text x="721.7" y="341.71" fill="#101010" stroke="#101010" stroke-width="0.1" font-size="7.5" textLength="17.9" lengthAdjust="spacingAndGlyphs">CHAR</text>
<text x="794.78" y="341.71" fill="#101010" stroke="#101010" stroke-width="0.1" font-size="7.5" textLength="3.82" lengthAdjust="spacingAndGlyphs">2</text>
<rect x="4.5" y="345.94" width="19" height="13.44" fill="url(#gInd)"/>
<rect x="4.5" y="358.38" width="19" height="1" fill="#c2c2c2"/>
<rect x="4.5" y="345.94" width="18.4" height="0.7" fill="#fbfbfb"/>
<rect x="23.5" y="345.94" width="777.3" height="13.44" fill="#C0C0FF"/>
<rect x="4.5" y="358.63" width="796.3" height="0.8" fill="#CFCFCF" opacity="0.85"/>
<use href="#chk" x="43.5" y="352.44"/>
<use href="#fold" x="75.2" y="349.14"/>
<text x="88.2" y="355.14" fill="#101010" stroke="#101010" stroke-width="0.1" font-size="7.5" textLength="55.3" lengthAdjust="spacingAndGlyphs">SAPLKACB - 0002</text>
<text x="227.3" y="355.14" fill="#101010" stroke="#101010" stroke-width="0.1" font-size="7.5" textLength="171.7" lengthAdjust="spacingAndGlyphs">Dialog Box with all Account Assignments for Batch Input</text>
<rect x="4.5" y="359.38" width="19" height="13.44" fill="url(#gInd)"/>
<rect x="4.5" y="371.82" width="19" height="1" fill="#c2c2c2"/>
<rect x="4.5" y="359.38" width="18.4" height="0.7" fill="#fbfbfb"/>
<rect x="23.5" y="359.38" width="777.3" height="13.44" fill="#FFCC99"/>
<rect x="4.5" y="372.07" width="796.3" height="0.8" fill="#CFCFCF" opacity="0.85"/>
<use href="#chk" x="43.5" y="365.88"/>
<text x="165.2" y="368.58" fill="#101010" stroke="#101010" stroke-width="0.1" font-size="7.5" textLength="43.25" lengthAdjust="spacingAndGlyphs">BDC_CURSOR</text>
<text x="227.3" y="368.58" fill="#101010" stroke="#101010" stroke-width="0.1" font-size="7.5" textLength="46.22" lengthAdjust="spacingAndGlyphs">Cursor location</text>
<use href="#pin" x="458.6" y="361.38"/>
<use href="#arrow" x="469" y="362.68"/>
<use href="#flag" x="476.4" y="363.58"/>
<text x="509" y="368.58" fill="#101010" stroke="#101010" stroke-width="0.1" font-size="7.5" textLength="39.86" lengthAdjust="spacingAndGlyphs">COBL-KOSTL</text>
<text x="721.7" y="368.58" fill="#101010" stroke="#101010" stroke-width="0.1" font-size="7.5" textLength="17.9" lengthAdjust="spacingAndGlyphs">CHAR</text>
<rect x="4.5" y="372.82" width="19" height="13.44" fill="url(#gInd)"/>
<rect x="4.5" y="385.25" width="19" height="1" fill="#c2c2c2"/>
<rect x="4.5" y="372.82" width="18.4" height="0.7" fill="#fbfbfb"/>
<rect x="23.5" y="372.82" width="777.3" height="13.44" fill="#FFCC99"/>
<rect x="4.5" y="385.5" width="796.3" height="0.8" fill="#CFCFCF" opacity="0.85"/>
<use href="#chk" x="43.5" y="379.32"/>
<text x="165.2" y="382.02" fill="#101010" stroke="#101010" stroke-width="0.1" font-size="7.5" textLength="43.81" lengthAdjust="spacingAndGlyphs">BDC_OKCODE</text>
<text x="227.3" y="382.02" fill="#101010" stroke="#101010" stroke-width="0.1" font-size="7.5" textLength="73.05" lengthAdjust="spacingAndGlyphs">OK Code for this screen</text>
<use href="#pin" x="458.6" y="374.82"/>
<use href="#arrow" x="469" y="376.12"/>
<use href="#flag" x="476.4" y="377.02"/>
<text x="509" y="382.02" fill="#101010" stroke="#101010" stroke-width="0.1" font-size="7.5" textLength="21.71" lengthAdjust="spacingAndGlyphs">=ENTE</text>
<text x="721.7" y="382.02" fill="#101010" stroke="#101010" stroke-width="0.1" font-size="7.5" textLength="17.9" lengthAdjust="spacingAndGlyphs">CHAR</text>
<rect x="4.5" y="386.25" width="19" height="13.44" fill="url(#gInd)"/>
<rect x="4.5" y="398.69" width="19" height="1" fill="#c2c2c2"/>
<rect x="4.5" y="386.25" width="18.4" height="0.7" fill="#fbfbfb"/>
<rect x="23.5" y="386.25" width="777.3" height="13.44" fill="#CCFFCC"/>
<rect x="4.5" y="398.94" width="796.3" height="0.8" fill="#CFCFCF" opacity="0.85"/>
<use href="#chk" x="43.5" y="392.75"/>
<text x="165.2" y="395.45" fill="#101010" stroke="#101010" stroke-width="0.1" font-size="7.5" textLength="40.28" lengthAdjust="spacingAndGlyphs">COBL-GSBER</text>
<text x="227.3" y="395.45" fill="#101010" stroke="#101010" stroke-width="0.1" font-size="7.5" textLength="42.85" lengthAdjust="spacingAndGlyphs">Business Area</text>
<use href="#xl" x="457.9" y="388.15"/>
<use href="#arrow" x="469" y="389.56"/>
<use href="#flag" x="476.4" y="390.45"/>
<text x="509" y="395.45" fill="#101010" stroke="#101010" stroke-width="0.1" font-size="7.5" textLength="4.12" lengthAdjust="spacingAndGlyphs">K</text>
<text x="721.7" y="395.45" fill="#101010" stroke="#101010" stroke-width="0.1" font-size="7.5" textLength="17.9" lengthAdjust="spacingAndGlyphs">CHAR</text>
<text x="794.78" y="395.45" fill="#101010" stroke="#101010" stroke-width="0.1" font-size="7.5" textLength="3.82" lengthAdjust="spacingAndGlyphs">4</text>
<rect x="4.5" y="399.69" width="19" height="13.44" fill="url(#gInd)"/>
<rect x="4.5" y="412.13" width="19" height="1" fill="#c2c2c2"/>
<rect x="4.5" y="399.69" width="18.4" height="0.7" fill="#fbfbfb"/>
<rect x="23.5" y="399.69" width="777.3" height="13.44" fill="#CCFFCC"/>
<rect x="4.5" y="412.38" width="796.3" height="0.8" fill="#CFCFCF" opacity="0.85"/>
<use href="#chk" x="43.5" y="406.19"/>
<text x="165.2" y="408.89" fill="#101010" stroke="#101010" stroke-width="0.1" font-size="7.5" textLength="39.86" lengthAdjust="spacingAndGlyphs">COBL-KOSTL</text>
<text x="227.3" y="408.89" fill="#101010" stroke="#101010" stroke-width="0.1" font-size="7.5" textLength="35.99" lengthAdjust="spacingAndGlyphs">Cost Center</text>
<use href="#xl" x="457.9" y="401.59"/>
<use href="#arrow" x="469" y="402.99"/>
<use href="#flag" x="476.4" y="403.89"/>
<text x="509" y="408.89" fill="#101010" stroke="#101010" stroke-width="0.1" font-size="7.5" textLength="3.49" lengthAdjust="spacingAndGlyphs">L</text>
<text x="721.7" y="408.89" fill="#101010" stroke="#101010" stroke-width="0.1" font-size="7.5" textLength="17.9" lengthAdjust="spacingAndGlyphs">CHAR</text>
<text x="790.96" y="408.89" fill="#101010" stroke="#101010" stroke-width="0.1" font-size="7.5" textLength="7.64" lengthAdjust="spacingAndGlyphs">10</text>
<rect x="4.5" y="413.13" width="19" height="13.44" fill="url(#gInd)"/>
<rect x="4.5" y="425.57" width="19" height="1" fill="#c2c2c2"/>
<rect x="4.5" y="413.13" width="18.4" height="0.7" fill="#fbfbfb"/>
<rect x="23.5" y="413.13" width="777.3" height="13.44" fill="#C0C0FF"/>
<rect x="4.5" y="425.82" width="796.3" height="0.8" fill="#CFCFCF" opacity="0.85"/>
<use href="#chk" x="43.5" y="419.63"/>
<use href="#fold" x="75.2" y="416.33"/>
<text x="88.2" y="422.33" fill="#101010" stroke="#101010" stroke-width="0.1" font-size="7.5" textLength="56.2" lengthAdjust="spacingAndGlyphs">SAPMF05A - 0701</text>
<text x="227.3" y="422.33" fill="#101010" stroke="#101010" stroke-width="0.1" font-size="7.5" textLength="28.61" lengthAdjust="spacingAndGlyphs">Overview</text>
<rect x="4.5" y="426.57" width="19" height="13.44" fill="url(#gInd)"/>
<rect x="4.5" y="439" width="19" height="1" fill="#c2c2c2"/>
<rect x="4.5" y="426.57" width="18.4" height="0.7" fill="#fbfbfb"/>
<rect x="23.5" y="426.57" width="777.3" height="13.44" fill="#FFCC99"/>
<rect x="4.5" y="439.25" width="796.3" height="0.8" fill="#CFCFCF" opacity="0.85"/>
<use href="#chk" x="43.5" y="433.07"/>
<text x="165.2" y="435.77" fill="#101010" stroke="#101010" stroke-width="0.1" font-size="7.5" textLength="43.25" lengthAdjust="spacingAndGlyphs">BDC_CURSOR</text>
<text x="227.3" y="435.77" fill="#101010" stroke="#101010" stroke-width="0.1" font-size="7.5" textLength="46.22" lengthAdjust="spacingAndGlyphs">Cursor location</text>
<use href="#pin" x="458.6" y="428.57"/>
<use href="#arrow" x="469" y="429.87"/>
<use href="#flag" x="476.4" y="430.77"/>
<text x="509" y="435.77" fill="#101010" stroke="#101010" stroke-width="0.1" font-size="7.5" textLength="46.36" lengthAdjust="spacingAndGlyphs">RF05A-NEWKO</text>
<text x="721.7" y="435.77" fill="#101010" stroke="#101010" stroke-width="0.1" font-size="7.5" textLength="17.9" lengthAdjust="spacingAndGlyphs">CHAR</text>
<rect x="4.5" y="440" width="19" height="13.44" fill="url(#gInd)"/>
<rect x="4.5" y="452.44" width="19" height="1" fill="#c2c2c2"/>
<rect x="4.5" y="440" width="18.4" height="0.7" fill="#fbfbfb"/>
<rect x="23.5" y="440" width="777.3" height="13.44" fill="#FFCC99"/>
<rect x="4.5" y="452.69" width="796.3" height="0.8" fill="#CFCFCF" opacity="0.85"/>
<use href="#chk" x="43.5" y="446.5"/>
<text x="165.2" y="449.2" fill="#101010" stroke="#101010" stroke-width="0.1" font-size="7.5" textLength="43.81" lengthAdjust="spacingAndGlyphs">BDC_OKCODE</text>
<text x="227.3" y="449.2" fill="#101010" stroke="#101010" stroke-width="0.1" font-size="7.5" textLength="73.05" lengthAdjust="spacingAndGlyphs">OK Code for this screen</text>
<use href="#pin" x="458.6" y="442"/>
<use href="#arrow" x="469" y="443.3"/>
<use href="#flag" x="476.4" y="444.2"/>
<text x="509" y="449.2" fill="#101010" stroke="#101010" stroke-width="0.1" font-size="7.5" textLength="10.32" lengthAdjust="spacingAndGlyphs">/00</text>
<text x="721.7" y="449.2" fill="#101010" stroke="#101010" stroke-width="0.1" font-size="7.5" textLength="17.9" lengthAdjust="spacingAndGlyphs">CHAR</text>
<rect x="4.5" y="453.44" width="19" height="13.44" fill="url(#gInd)"/>
<rect x="4.5" y="465.88" width="19" height="1" fill="#c2c2c2"/>
<rect x="4.5" y="453.44" width="18.4" height="0.7" fill="#fbfbfb"/>
<rect x="23.5" y="453.44" width="777.3" height="13.44" fill="#CCFFCC"/>
<rect x="4.5" y="466.13" width="796.3" height="0.8" fill="#CFCFCF" opacity="0.85"/>
<use href="#chk" x="43.5" y="459.94"/>
<text x="165.2" y="462.64" fill="#101010" stroke="#101010" stroke-width="0.1" font-size="7.5" textLength="45.31" lengthAdjust="spacingAndGlyphs">RF05A-NEWBS</text>
<text x="227.3" y="462.64" fill="#101010" stroke="#101010" stroke-width="0.1" font-size="7.5" textLength="106.39" lengthAdjust="spacingAndGlyphs">Posting Key for the Next Line Item</text>
<use href="#xl" x="457.9" y="455.34"/>
<use href="#arrow" x="469" y="456.74"/>
<use href="#flag" x="476.4" y="457.64"/>
<text x="509" y="462.64" fill="#101010" stroke="#101010" stroke-width="0.1" font-size="7.5" textLength="5.4" lengthAdjust="spacingAndGlyphs">M</text>
<text x="721.7" y="462.64" fill="#101010" stroke="#101010" stroke-width="0.1" font-size="7.5" textLength="17.9" lengthAdjust="spacingAndGlyphs">CHAR</text>
<text x="794.78" y="462.64" fill="#101010" stroke="#101010" stroke-width="0.1" font-size="7.5" textLength="3.82" lengthAdjust="spacingAndGlyphs">2</text>
<rect x="4.5" y="466.88" width="19" height="13.44" fill="url(#gInd)"/>
<rect x="4.5" y="479.31" width="19" height="1" fill="#c2c2c2"/>
<rect x="4.5" y="466.88" width="18.4" height="0.7" fill="#fbfbfb"/>
<rect x="23.5" y="466.88" width="777.3" height="13.44" fill="#CCFFCC"/>
<rect x="4.5" y="479.56" width="796.3" height="0.8" fill="#CFCFCF" opacity="0.85"/>
<use href="#chk" x="43.5" y="473.38"/>
<text x="165.2" y="476.08" fill="#101010" stroke="#101010" stroke-width="0.1" font-size="7.5" textLength="46.36" lengthAdjust="spacingAndGlyphs">RF05A-NEWKO</text>
<text x="227.3" y="476.08" fill="#101010" stroke="#101010" stroke-width="0.1" font-size="7.5" textLength="138.85" lengthAdjust="spacingAndGlyphs">Account or Matchcode for the Next Line Item</text>
<use href="#xl" x="457.9" y="468.78"/>
<use href="#arrow" x="469" y="470.18"/>
<use href="#flag" x="476.4" y="471.08"/>
<text x="509" y="476.08" fill="#101010" stroke="#101010" stroke-width="0.1" font-size="7.5" textLength="4.67" lengthAdjust="spacingAndGlyphs">N</text>
<text x="721.7" y="476.08" fill="#101010" stroke="#101010" stroke-width="0.1" font-size="7.5" textLength="17.9" lengthAdjust="spacingAndGlyphs">CHAR</text>
<text x="790.96" y="476.08" fill="#101010" stroke="#101010" stroke-width="0.1" font-size="7.5" textLength="7.64" lengthAdjust="spacingAndGlyphs">17</text>
<rect x="4.5" y="480.31" width="19" height="13.44" fill="url(#gInd)"/>
<rect x="4.5" y="492.75" width="19" height="1" fill="#c2c2c2"/>
<rect x="4.5" y="480.31" width="18.4" height="0.7" fill="#fbfbfb"/>
<rect x="23.5" y="480.31" width="777.3" height="13.44" fill="#C0C0FF"/>
<rect x="4.5" y="493" width="796.3" height="0.8" fill="#CFCFCF" opacity="0.85"/>
<use href="#chk" x="43.5" y="486.81"/>
<rect x="23.1" y="50.33" width="0.8" height="432.67" fill="#CFCFCF" opacity="0.85"/>
<rect x="63.2" y="50.33" width="0.8" height="432.67" fill="#CFCFCF" opacity="0.85"/>
<rect x="163.2" y="50.33" width="0.8" height="432.67" fill="#CFCFCF" opacity="0.85"/>
<rect x="225.3" y="50.33" width="0.8" height="432.67" fill="#CFCFCF" opacity="0.85"/>
<rect x="437.9" y="50.33" width="0.8" height="432.67" fill="#CFCFCF" opacity="0.85"/>
<rect x="507" y="50.33" width="0.8" height="432.67" fill="#CFCFCF" opacity="0.85"/>
<rect x="574.2" y="50.33" width="0.8" height="432.67" fill="#CFCFCF" opacity="0.85"/>
<rect x="639.6" y="50.33" width="0.8" height="432.67" fill="#CFCFCF" opacity="0.85"/>
<rect x="719.5" y="50.33" width="0.8" height="432.67" fill="#CFCFCF" opacity="0.85"/>
<rect x="754.8" y="50.33" width="0.8" height="432.67" fill="#CFCFCF" opacity="0.85"/>
<rect x="23" y="50.33" width="0.9" height="432.67" fill="#c2c2c2"/>
<path d="M8.8,54.33 L11.7,57.03 L8.8,59.73" fill="none" stroke="#111" stroke-width="1.2"/>
</g>
</g>
</svg>
</body>
</html>
